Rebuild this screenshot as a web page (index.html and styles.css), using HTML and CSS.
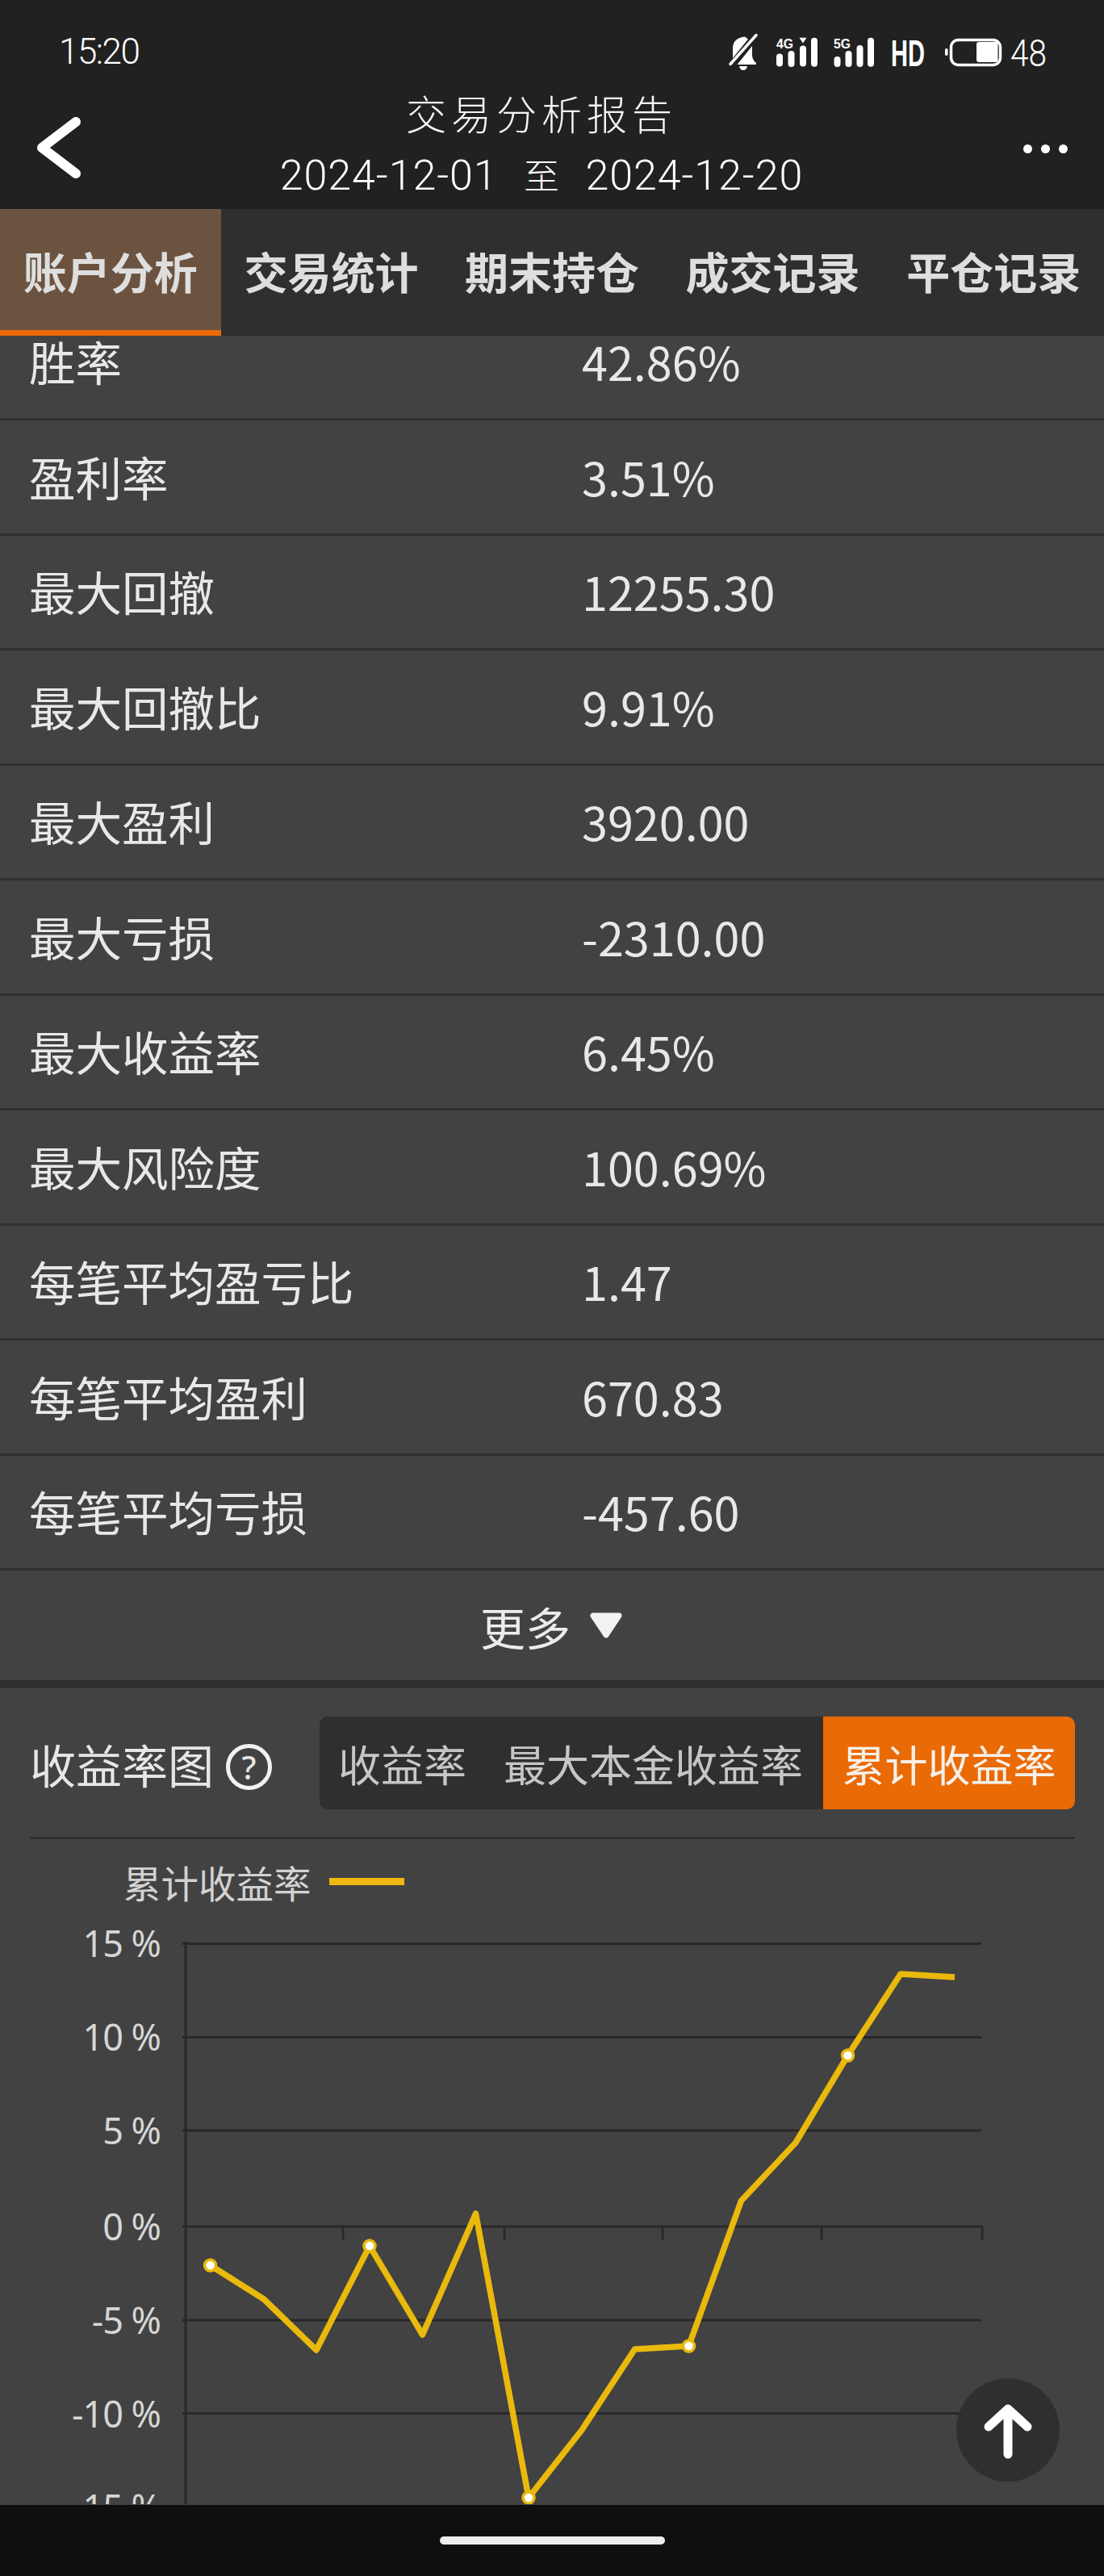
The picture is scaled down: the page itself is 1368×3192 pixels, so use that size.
FILE: index.html
```html
<!DOCTYPE html>
<html lang="zh-CN">
<head>
<meta charset="utf-8">
<title>交易分析报告</title>
<link rel="stylesheet" href="styles.css">
</head>
<body>
<div class="phone">
  <header class="top">
    <div class="status">
      <span class="time">15:20</span>
      <svg class="status-icons" viewBox="860 20 460 80" width="460" height="80" aria-label="状态">
        <g fill="#fff">
          <path d="M908 72V60Q908 47 923 45.500L927 48.500Z"/>
          <path d="M932 57V68Q932 74 937 78V80H913.500Z"/>
          <path d="M916 82H926Q925 87 921 87T916 82Z"/>
          <rect x="962" y="66.500" width="8" height="16" rx="4"/>
          <rect x="976.500" y="63" width="8" height="20" rx="4"/>
          <rect x="991" y="56.500" width="8" height="26" rx="4"/>
          <path d="M990.500 46.700H999.500L995 53.500Z"/>
          <rect x="1005" y="46.700" width="8" height="36" rx="4"/>
          <rect x="1033.500" y="70" width="8" height="13" rx="4"/>
          <rect x="1047.500" y="63" width="8" height="20" rx="4"/>
          <rect x="1061.500" y="56" width="8" height="27" rx="4"/>
          <rect x="1075" y="46.700" width="8" height="36" rx="4"/>
          <text class="net" x="962" y="60" textLength="21" lengthAdjust="spacingAndGlyphs">4G</text>
          <text class="net" x="1033" y="60" textLength="21" lengthAdjust="spacingAndGlyphs">5G</text>
          <text class="hd" x="1104" y="82" textLength="42" lengthAdjust="spacingAndGlyphs">HD</text>
          <rect x="1171" y="60" width="3.500" height="9" rx="1.700"/>
          <rect x="1210" y="52" width="26.500" height="25" rx="3"/>
          <text class="batt" x="1252" y="82" textLength="45" lengthAdjust="spacingAndGlyphs">48</text>
        </g>
        <path d="M905 79.500L937 43.500" stroke="#fff" stroke-width="3.500" stroke-linecap="round" fill="none"/>
        <rect x="1178.500" y="49.500" width="61" height="31" rx="9" fill="none" stroke="#fff" stroke-width="3.500"/>
      </svg>
    </div>
    <div class="nav">
      <svg class="back" viewBox="0 0 110 159" width="110" height="159" aria-label="返回">
        <path d="M94 51L52 83L94 115" fill="none" stroke="#fff" stroke-width="12" stroke-linecap="round" stroke-linejoin="round"/>
      </svg>
      <div class="title">
        <div class="title-main">交易分析报告</div>
        <div class="title-date">2024-12-01 <span class="zhi">至</span> 2024-12-20</div>
      </div>
      <div class="more-dots"><i></i><i></i><i></i></div>
    </div>
  </header>

  <nav class="tabs">
    <div class="tab tab-on">账户分析</div>
    <div class="tab">交易统计</div>
    <div class="tab">期末持仓</div>
    <div class="tab">成交记录</div>
    <div class="tab">平仓记录</div>
  </nav>

  <main class="content">
    <div class="scroller">
      <section class="stats">
        <div class="row"><span>胜率</span><span class="val">42.86%</span></div>
        <div class="row"><span>盈利率</span><span class="val">3.51%</span></div>
        <div class="row"><span>最大回撤</span><span class="val">12255.30</span></div>
        <div class="row"><span>最大回撤比</span><span class="val">9.91%</span></div>
        <div class="row"><span>最大盈利</span><span class="val">3920.00</span></div>
        <div class="row"><span>最大亏损</span><span class="val">-2310.00</span></div>
        <div class="row"><span>最大收益率</span><span class="val">6.45%</span></div>
        <div class="row"><span>最大风险度</span><span class="val">100.69%</span></div>
        <div class="row"><span>每笔平均盈亏比</span><span class="val">1.47</span></div>
        <div class="row"><span>每笔平均盈利</span><span class="val">670.83</span></div>
        <div class="row"><span>每笔平均亏损</span><span class="val">-457.60</span></div>
      </section>
      <div class="more">
        <span>更多</span>
        <svg viewBox="0 0 40 32" width="40" height="32" aria-hidden="true"><path d="M4 4H36L20 28Z" fill="#f2f2f2" stroke="#f2f2f2" stroke-width="7" stroke-linejoin="round"/></svg>
      </div>
      <section class="chart-card">
        <div class="chart-head">
          <div class="chart-title">收益率图<span class="help">?</span></div>
          <div class="seg">
            <span class="seg-item">收益率</span>
            <span class="seg-item">最大本金收益率</span>
            <span class="seg-item seg-on">累计收益率</span>
          </div>
        </div>
        <div class="legend"><span>累计收益率</span><i class="legend-line"></i></div>
        <svg class="chart" viewBox="0 2380 1368 724" width="1368" height="724">
          <g class="grid">
            <path d="M230 2407V3104"/>
            <path d="M226 2409.500H1216M226 2525.500H1216M226 2641H1216M226 2760H1218M226 2876H1216M226 2991.500H1216"/>
            <path d="M425 2760V2776M625 2760V2776M821 2760V2776M1018 2760V2776M1217 2760V2776"/>
          </g>
          <g class="axis">
            <text x="199" y="2426">15 %</text>
            <text x="199" y="2542">10 %</text>
            <text x="199" y="2658">5 %</text>
            <text x="199" y="2777">0 %</text>
            <text x="199" y="2893">-5 %</text>
            <text x="199" y="3009">-10 %</text>
            <text x="199" y="3125">-15 %</text>
          </g>
          <polyline class="line" points="260.500,2808 327,2850 392,2913 458,2784 523.500,2894 589.500,2744 655,3096 721,3012 786.500,2912 853.500,2908 918.500,2728 986,2656 1050.500,2548 1116,2447 1183,2451"/>
          <g class="dots">
            <circle cx="260.500" cy="2808" r="7"/>
            <circle cx="458" cy="2784" r="7"/>
            <circle cx="655" cy="3096" r="7"/>
            <circle cx="853.500" cy="2908" r="7"/>
            <circle cx="1050.500" cy="2548" r="7"/>
          </g>
        </svg>
      </section>
    </div>
    <button class="to-top" aria-label="回到顶部">
      <svg viewBox="0 0 128 128" width="128" height="128"><path d="M64 94V38M40 60L64 38L88 60" fill="none" stroke="#fff" stroke-width="11" stroke-linecap="round" stroke-linejoin="round"/></svg>
    </button>
  </main>

  <footer class="home"><i class="home-bar"></i></footer>
</div>
</body>
</html>
```

FILE: styles.css
```css
* { box-sizing: border-box; }
html, body { margin: 0; padding: 0; background: #424242; }
body { font-family: "Noto Sans CJK SC", "Noto Sans", sans-serif; color: #e8e8e8; }

.phone { width: 1368px; height: 3192px; display: flex; flex-direction: column; overflow: hidden; }

.top { height: 259px; background: #212121; color: #fff; flex: none; }
.status { height: 100px; display: flex; align-items: flex-start; justify-content: space-between; padding: 0 48px 0 73px; }
.time { font-family: Roboto, sans-serif; font-weight: 300; font-size: 44px; letter-spacing: -1.500px; line-height: 44px; margin-top: 42px; }
.status-icons { margin-top: 20px; }
.net { font-family: "Liberation Sans", sans-serif; font-weight: 700; font-size: 17px; }
.hd { font-family: "Liberation Sans", sans-serif; font-weight: 700; font-size: 46px; }
.batt { font-family: Roboto, sans-serif; font-weight: 300; font-size: 46px; }

.nav { height: 159px; display: grid; grid-template-columns: 110px 1fr 136px; align-items: start; }
.back { display: block; }
.title { text-align: center; font-weight: 300; }
.title-main { font-size: 50px; letter-spacing: 6px; line-height: 60px; margin-top: 9px; color: #f4f4f4; }
.title-date { font-family: Roboto, "Noto Sans CJK SC", sans-serif; font-weight: 300; font-size: 52px; letter-spacing: 0.900px; line-height: 60px; margin-top: 17px; white-space: pre; }
.zhi { font-family: "Noto Sans CJK SC", sans-serif; font-size: 44px; font-weight: 300; padding: 0 19px; letter-spacing: 0; }
.more-dots { display: flex; gap: 11px; padding: 79px 0 0 36px; }
.more-dots i { width: 11px; height: 11px; border-radius: 50%; background: #fff; }

.tabs { height: 157px; display: flex; background: #2f2f2f; flex: none; }
.tab { flex: 1; display: flex; align-items: center; justify-content: center; font-size: 54px; font-weight: 700; color: #dedede; padding-bottom: 4px; }
.tab-on { background: #6b5340; border-bottom: 7px solid #ea6a05; padding: 3px 0 0; }

.content { flex: 1; position: relative; overflow: hidden; background: #424242; }
.scroller { margin-top: -37.500px; }

.row { height: 142.500px; display: grid; grid-template-columns: 685px 1fr; align-items: center; padding: 0 0 2px 36px; border-bottom: 3px solid #303030; font-size: 57.500px; line-height: 64px; }
.val { font-size: 57.500px; }

.more { height: 136px; display: flex; align-items: center; justify-content: center; gap: 24px; font-size: 56px; color: #ececec; padding: 0 2px 0 0; }
.more svg { display: block; }

.chart-card { border-top: 10px solid #2f2f2f; }
.chart-head { margin: 35px 36px 0 37px; height: 152px; border-bottom: 3px solid #2f2f2f; display: flex; justify-content: space-between; align-items: flex-start; }
.chart-title { height: 115px; display: flex; align-items: center; font-size: 57px; padding-left: 0; gap: 15px; color: #e6e6e6; }
.help { width: 57px; height: 57px; border: 5px solid #f2f2f2; border-radius: 50%; display: flex; align-items: center; justify-content: center; font-size: 40px; font-weight: 500; font-family: "Noto Sans", sans-serif; line-height: 1; margin-top: 10px; }
.seg { height: 115px; width: 936px; display: flex; justify-content: space-between; background: #2f2f2f; border-radius: 10px; overflow: hidden; }
.seg-item { flex: none; display: flex; align-items: center; padding: 0 23px; font-size: 53px; color: #c6c6c6; white-space: nowrap; }
.seg-on { background: #ea6a05; color: #f5f0ea; margin-left: auto; width: 312px; justify-content: center; padding: 0; }

.legend { height: 100px; display: flex; align-items: center; gap: 22px; padding: 4px 0 0 153px; font-size: 46.500px; color: #d2d2d2; }
.legend-line { width: 93px; height: 9px; background: #eeb90f; }

.chart { display: block; }
.grid path { fill: none; stroke: #282828; stroke-width: 3; }
.axis text { font-family: "Noto Sans", sans-serif; font-size: 45px; letter-spacing: -1px; fill: #d6d6d6; text-anchor: end; }
.line { fill: none; stroke: #e9b90c; stroke-width: 7.500; stroke-linejoin: round; }
.dots circle { fill: #fff; stroke: #e9b90c; stroke-width: 3.500; }

.to-top { position: absolute; left: 1185px; top: 2531px; width: 128px; height: 128px; padding: 0; border: 0; border-radius: 50%; background: #2f2f2f; }
.to-top svg { display: block; }

.home { height: 88px; flex: none; background: #0f0f0f; display: flex; justify-content: center; padding-top: 39px; }
.home-bar { width: 279px; height: 10px; border-radius: 5px; background: #ededed; }
```
